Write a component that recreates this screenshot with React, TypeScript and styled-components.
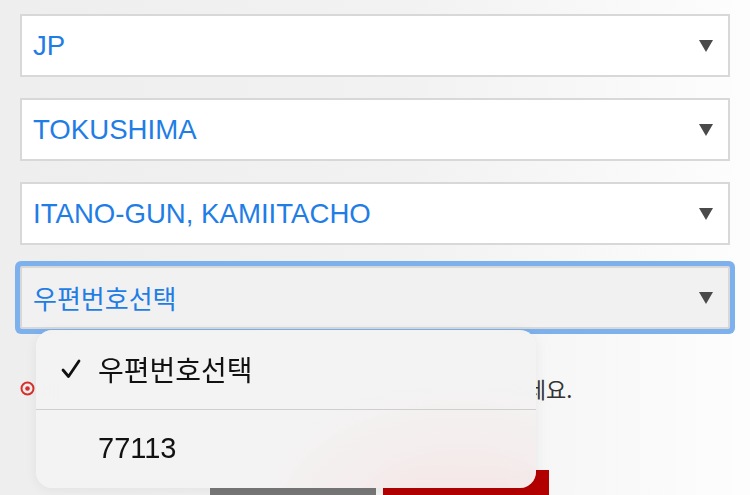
import React from "react";
import styled, { createGlobalStyle } from "styled-components";

const GlobalStyle = createGlobalStyle`
  html, body {
    margin: 0;
    padding: 0;
    width: 750px;
    height: 495px;
    overflow: hidden;
  }
  body {
    background: linear-gradient(to right, #eeeeee 0%, #f2f2f2 55%, #fdfdfd 100%);
    font-family: "Liberation Sans", "Noto Sans CJK KR", sans-serif;
  }
`;

const Page = styled.div`
  position: relative;
  height: 495px;
  overflow: hidden;
  padding: 14px 20px 0 20px;
  box-sizing: border-box;
`;

const Fields = styled.div`
  display: flex;
  flex-direction: column;
  gap: 21px;
`;

const SelectBox = styled.div<{ $focused?: boolean }>`
  display: flex;
  align-items: center;
  justify-content: space-between;
  height: 63px;
  box-sizing: border-box;
  padding: 0 15px 0 11px;
  background: ${(p) => (p.$focused ? "#f1f1f1" : "#ffffff")};
  border: 2px solid #d8d8d8;
  border-radius: ${(p) => (p.$focused ? "2px" : "0")};
  box-shadow: ${(p) => (p.$focused ? "0 0 0 5px #7cb1ee" : "none")};
`;

const SelectText = styled.span<{ $ko?: boolean }>`
  color: #1f7de6;
  font-size: ${(p) => (p.$ko ? "26px" : "27.6px")};
  font-family: ${(p) =>
    p.$ko
      ? '"Noto Sans CJK KR", sans-serif'
      : '"Liberation Sans", "Noto Sans CJK KR", sans-serif'};
  line-height: 1;
`;

const Caret = styled.span`
  width: 0;
  height: 0;
  border-left: 7.5px solid transparent;
  border-right: 7.5px solid transparent;
  border-top: 12px solid #4a4a4a;
`;

const Notice = styled.div`
  display: flex;
  align-items: center;
  gap: 6px;
  margin-top: 43px;
  font-family: "Noto Sans CJK KR", sans-serif;
  font-size: 22px;
  color: #333;
  white-space: nowrap;
`;

const Buttons = styled.div`
  display: flex;
  align-items: flex-start;
  gap: 7px;
  margin: 66px 0 0 190px;
`;

const Button = styled.div<{ $primary?: boolean }>`
  width: 166px;
  height: 60px;
  margin-top: ${(p) => (p.$primary ? "0" : "18px")};
  background: ${(p) => (p.$primary ? "#b30000" : "#777777")};
  color: #fff;
  font-family: "Noto Sans CJK KR", sans-serif;
  font-size: 22px;
  display: flex;
  justify-content: center;
  padding-top: ${(p) => (p.$primary ? "20px" : "2px")};
  box-sizing: border-box;
`;

const Menu = styled.div`
  position: absolute;
  left: 36px;
  top: 330px;
  width: 500px;
  height: 158px;
  border-radius: 16px;
  overflow: hidden;
  background:
    radial-gradient(ellipse 220px 140px at 85% 120%, rgba(247, 226, 226, 0.75), rgba(243, 243, 243, 0) 100%),
    rgba(243, 243, 243, 0.985);
  backdrop-filter: blur(18px);
  box-shadow: 0 2px 14px rgba(0, 0, 0, 0.06);
  display: flex;
  flex-direction: column;
`;

const MenuItem = styled.div<{ $ko?: boolean }>`
  flex: 1;
  display: flex;
  align-items: center;
  padding-left: 25px;
  gap: 15px;
  color: #111;
  font-size: ${(p) => (p.$ko ? "28px" : "29px")};
  font-family: ${(p) =>
    p.$ko
      ? '"Noto Sans CJK KR", sans-serif'
      : '"Liberation Sans", "Noto Sans CJK KR", sans-serif'};
  & + & {
    border-top: 1px solid #cfcfcf;
  }
`;

const CheckSlot = styled.span`
  width: 22px;
  display: flex;
`;

const fields = ["JP", "TOKUSHIMA", "ITANO-GUN, KAMIITACHO"];

export default function App() {
  return (
    <>
      <GlobalStyle />
      <Page>
        <Fields>
          {fields.map((f) => (
            <SelectBox key={f}>
              <SelectText>{f}</SelectText>
              <Caret />
            </SelectBox>
          ))}
          <SelectBox $focused>
            <SelectText $ko>우편번호선택</SelectText>
            <Caret />
          </SelectBox>
        </Fields>
        <Notice>
          <svg width="15" height="15" viewBox="0 0 15 15">
            <circle cx="7.5" cy="7.5" r="6" fill="none" stroke="#d8302b" strokeWidth="2" />
            <circle cx="7.5" cy="7.5" r="2.3" fill="#d8302b" />
          </svg>
          <span>배송 가능 지역 확인을 위해 해당 우편번호를 선택해 주세요.</span>
        </Notice>
        <Buttons>
          <Button>취소</Button>
          <Button $primary>확인</Button>
        </Buttons>
        <Menu>
          <MenuItem $ko>
            <CheckSlot>
              <svg width="20" height="20" viewBox="0 0 20 20">
                <path d="M2 11 L7.5 17.5 L18 2" fill="none" stroke="#111" strokeWidth="2.8" strokeLinecap="round" strokeLinejoin="round" />
              </svg>
            </CheckSlot>
            우편번호선택
          </MenuItem>
          <MenuItem>
            <CheckSlot />
            77113
          </MenuItem>
        </Menu>
      </Page>
    </>
  );
}
